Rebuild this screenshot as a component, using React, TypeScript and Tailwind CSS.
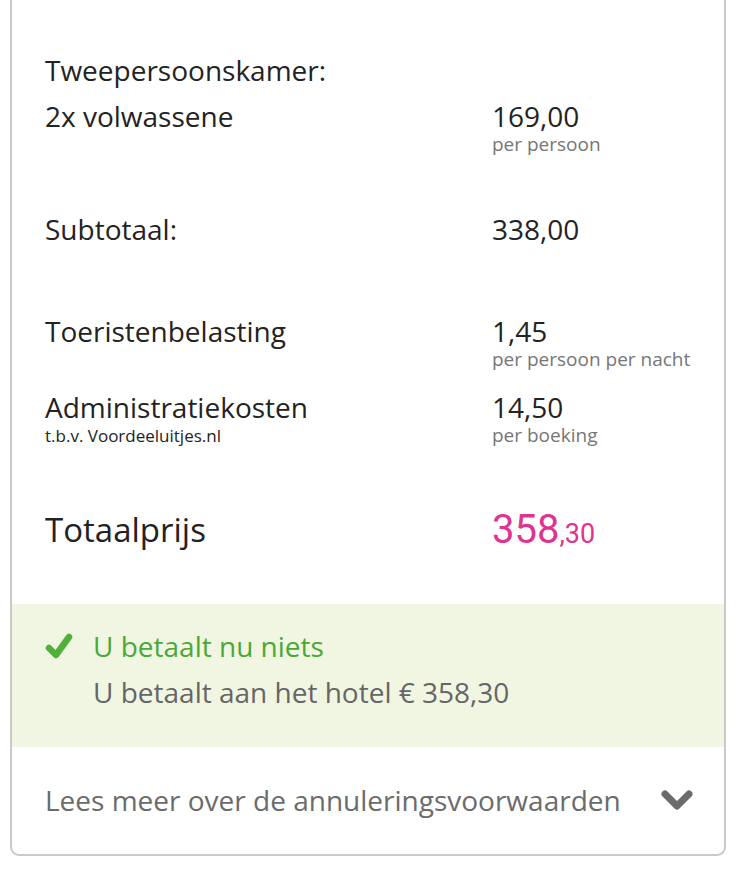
import React from "react";

const font = { fontFamily: '"Open Sans", "Noto Sans", sans-serif' };

function Row({ label, value, sub, labelSub }: { label: string; value: string; sub?: string; labelSub?: string }) {
  return (
    <div className="grid grid-cols-[447px_1fr]">
      <div>
        <div className="text-[28px] leading-[32px] text-[#232323]">{label}</div>
        {labelSub && <div className="mt-[4px] text-[17px] leading-[18px] text-[#232323]">{labelSub}</div>}
      </div>
      <div>
        <div className="text-[28px] leading-[32px] text-[#232323]">{value}</div>
        {sub && <div className="mt-[3px] text-[19px] leading-[18px] text-[#767676]">{sub}</div>}
      </div>
    </div>
  );
}

export default function App() {
  return (
    <div className="w-[740px] h-[870px] bg-white" style={font}>
      <div className="ml-[10px] w-[716px] border-2 border-t-0 border-[#c9c9c9] rounded-b-[9px] overflow-hidden">
        <div className="pl-[33px] pr-[20px] pt-[54px]">
          <div className="text-[28px] leading-[32px] text-[#232323]">Tweepersoonskamer:</div>
          <div className="mt-[14px]">
            <Row label="2x volwassene" value="169,00" sub="per persoon" />
          </div>
          <div className="mt-[60px]">
            <Row label="Subtotaal:" value="338,00" />
          </div>
          <div className="mt-[70px]">
            <Row label="Toeristenbelasting" value="1,45" sub="per persoon per nacht" />
          </div>
          <div className="mt-[23px]">
            <Row label="Administratiekosten" value="14,50" sub="per boeking" labelSub="t.b.v. Voordeeluitjes.nl" />
          </div>
          <div className="mt-[63px] h-[44px] grid grid-cols-[447px_1fr] items-center">
            <div className="text-[33px] leading-[44px] font-medium text-[#222222]">Totaalprijs</div>
            <div className="text-[#e0338f] leading-[44px] h-[44px] flex items-baseline" style={{ fontFamily: 'Roboto, "Open Sans", sans-serif' }}>
              <span className="text-[40px] leading-[44px]">358</span>
              <span className="text-[27px] leading-[44px]">,30</span>
            </div>
          </div>
        </div>
        <div className="mt-[52px] bg-[#f1f6e3] h-[143px] pl-[33px] pt-[24px]">
          <div className="flex items-center gap-[20px]">
            <svg width="28" height="27" viewBox="0 0 28 27" className="shrink-0">
              <path d="M4 15 L11 22 L24 4" fill="none" stroke="#4fb13a" strokeWidth="6.5" strokeLinecap="round" strokeLinejoin="round" />
            </svg>
            <div className="text-[28px] leading-[36px] text-[#4aa935]">U betaalt nu niets</div>
          </div>
          <div className="mt-[10px] pl-[48px] text-[28px] leading-[36px] text-[#666666]">U betaalt aan het hotel € 358,30</div>
        </div>
        <div className="pl-[33px] pr-[30px] pt-[35px] pb-[36px] flex items-center justify-between">
          <div className="text-[28px] leading-[36px] text-[#6b6b6b]">Lees meer over de annuleringsvoorwaarden</div>
          <svg width="34" height="24" viewBox="0 0 34 24" className="shrink-0">
            <polyline points="5,6 17,18 29,6" fill="none" stroke="#6b6b6b" strokeWidth="7" strokeLinecap="round" strokeLinejoin="round" />
          </svg>
        </div>
      </div>
    </div>
  );
}
